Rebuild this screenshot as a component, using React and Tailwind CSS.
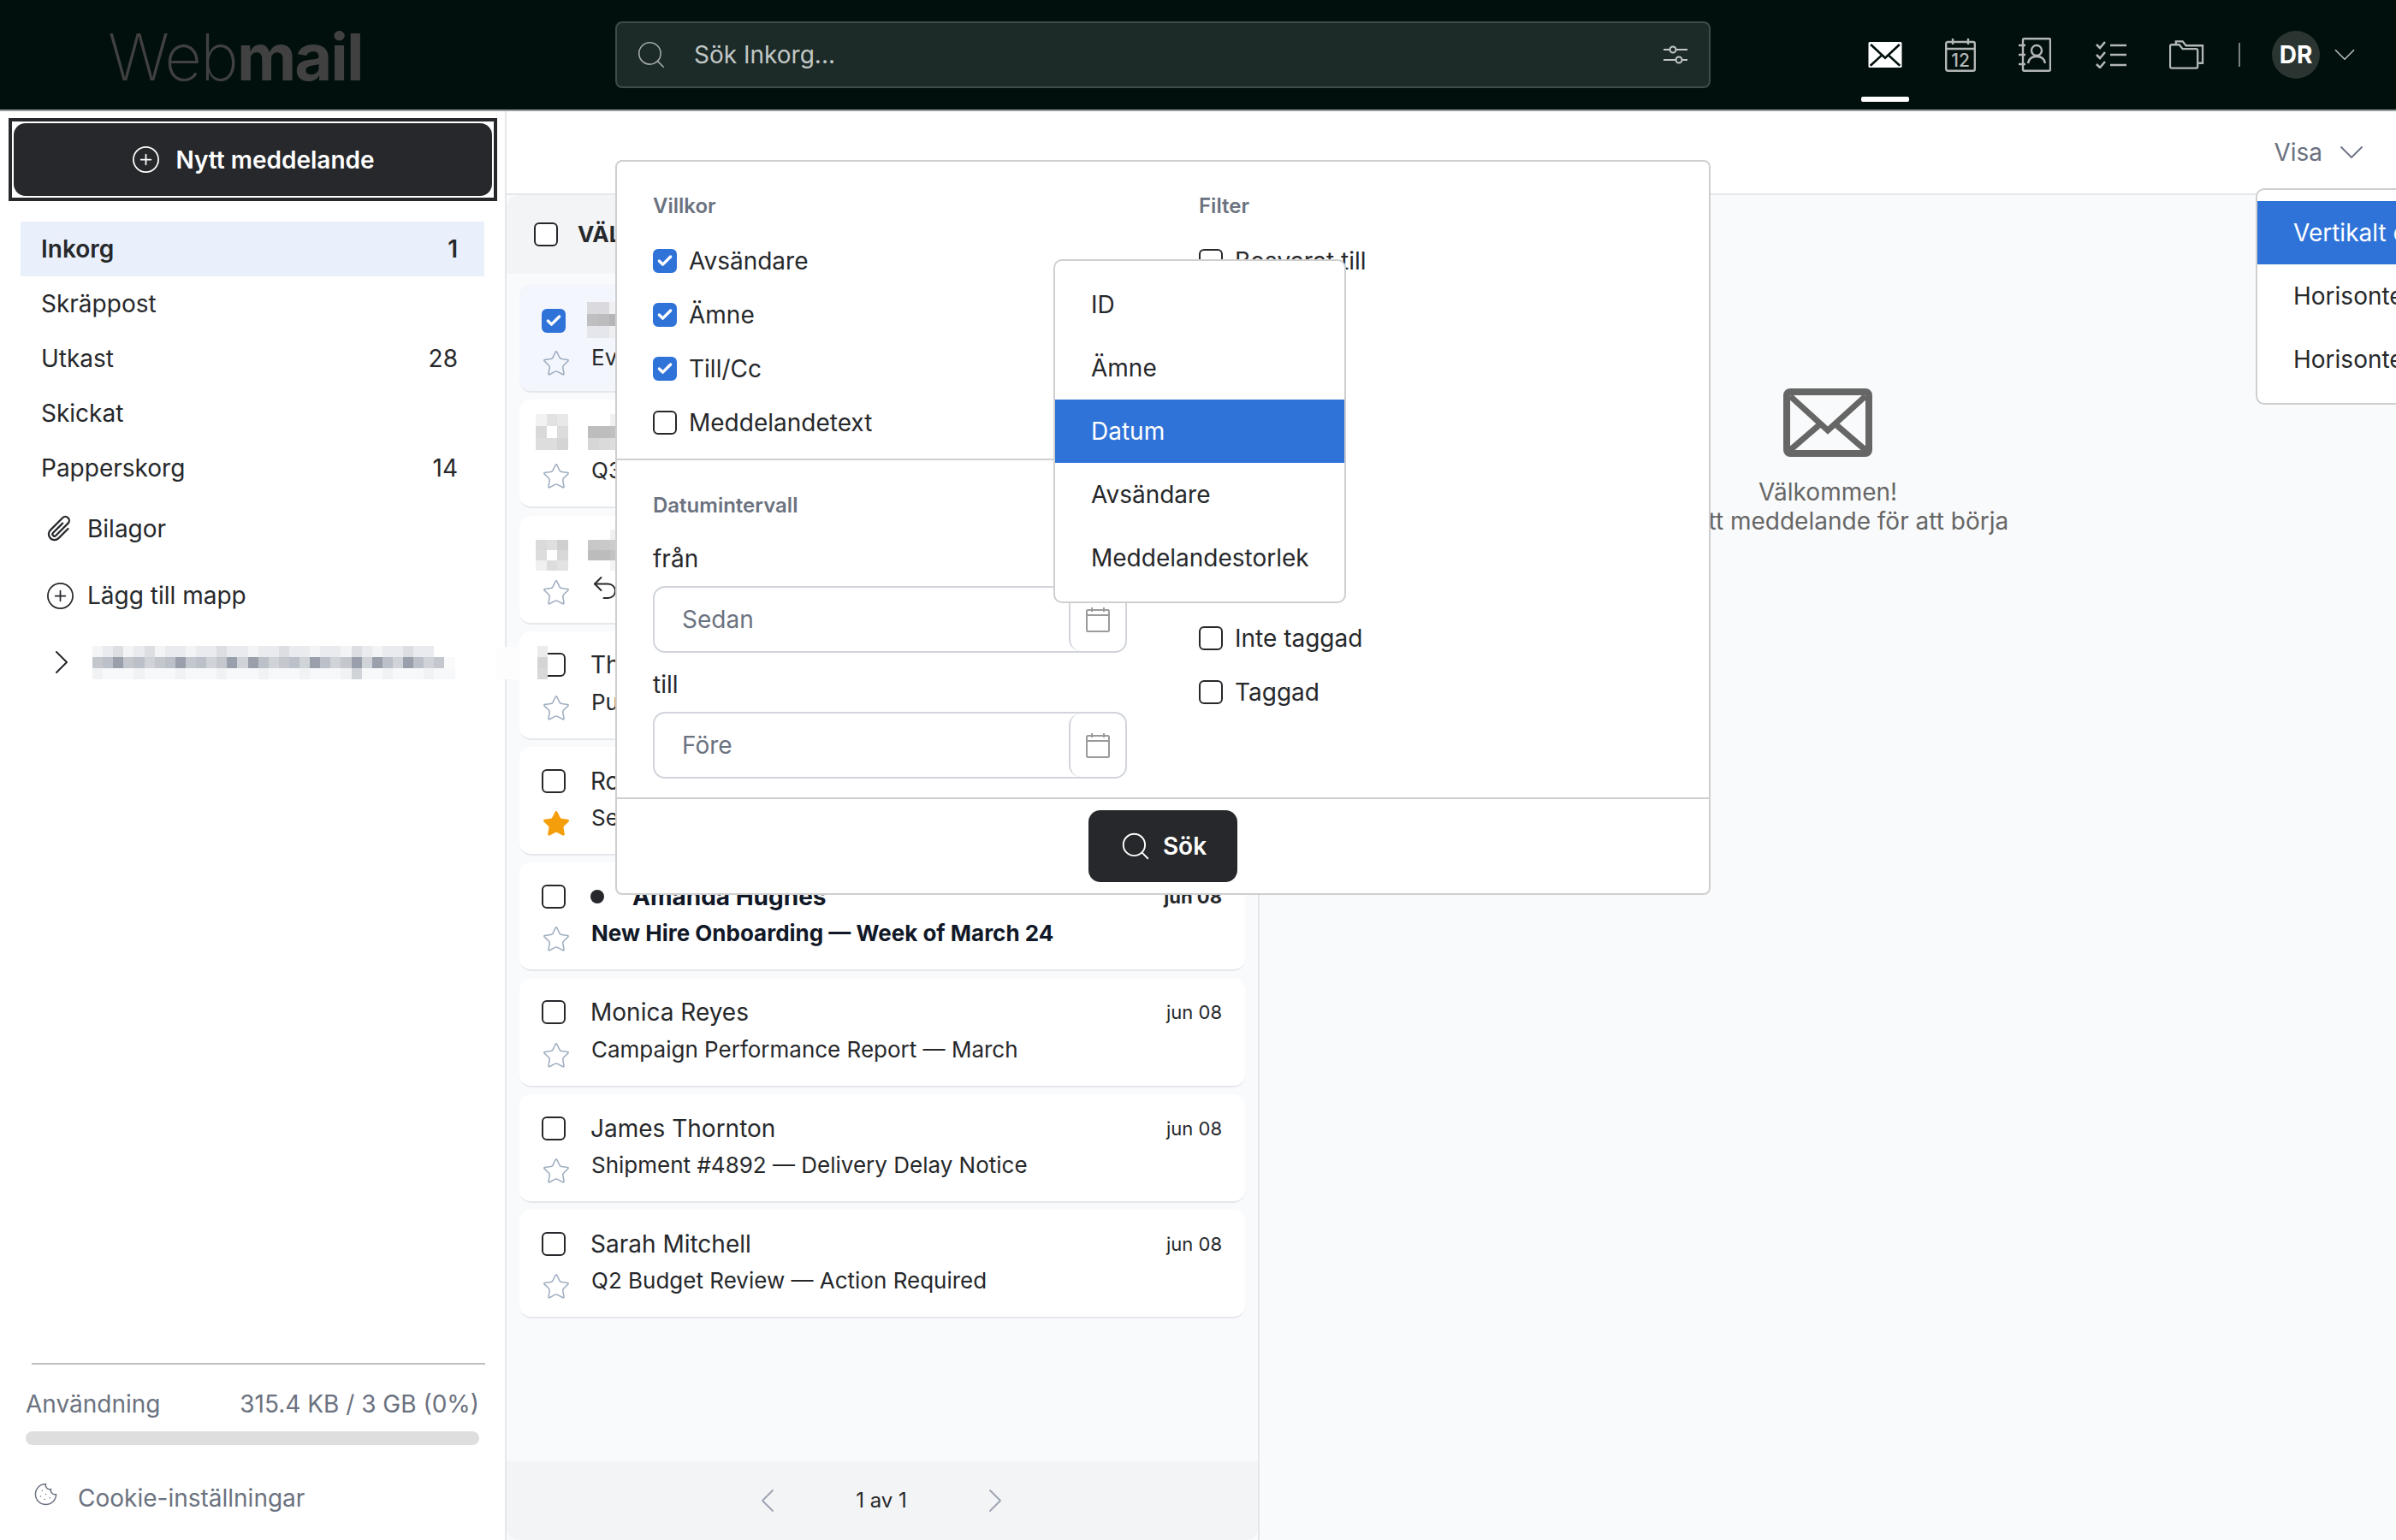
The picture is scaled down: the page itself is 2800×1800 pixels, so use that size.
import React from "react";
import { Star, Undo2, Cookie, ChevronDown, ChevronRight, ChevronLeft, CirclePlus, Search, Check } from "lucide-react";
import { BsPaperclip } from "react-icons/bs";

const Box = ({ checked, hidden }) => (
  <span className={`flex h-[28px] w-[28px] shrink-0 items-center justify-center rounded-[6px] border-2 ${hidden ? "invisible" : ""} ${checked ? "border-[#2f73d9] bg-[#2f73d9]" : "border-[#26282b] bg-white"}`}>
    {checked && <Check size={20} strokeWidth={4} color="#fff" />}
  </span>
);

const Mosaic = ({ rows, cw = 13, ch = 14, className }) => (
  <svg className={className} width={rows[0].length * cw} height={rows.length * ch} shapeRendering="crispEdges">
    {rows.map((r, y) => r.map((c, x) => c && <rect key={x + "-" + y} x={x * cw} y={y * ch} width={cw} height={ch} fill={c} />))}
  </svg>
);

const dark = new Set([2, 8, 13, 15, 21, 25, 27, 30]);
const folderRows = [
  Array.from({ length: 35 }, (_, i) => (i > 32 ? "#ffffff" : [2, 5, 12, 18, 25, 30].includes(i) ? "#dcdee2" : i % 3 === 0 ? "#f3f4f6" : "#eaebee")),
  Array.from({ length: 35 }, (_, i) => (i > 33 ? "#fafafa" : dark.has(i) ? "#9aa0ab" : i % 3 === 0 ? "#c4c7cd" : i % 3 === 1 ? "#bcc0c8" : "#d0d3d8")),
  Array.from({ length: 35 }, (_, i) => (i === 25 ? "#d0d3d8" : i % 4 === 0 ? "#f1f2f4" : "#f7f8f9")),
];

const CalendarGlyph = ({ className, color = "#9a9a9a" }) => (
  <svg viewBox="0 0 28 30" className={className} fill="none" stroke={color} strokeWidth="2">
    <rect x="1" y="4" width="26" height="25" rx="1.5" />
    <path d="M1 10h26M7 1v5M21 1v5" />
  </svg>
);

const Nav = ({ label, count, active }) => (
  <div className={`flex h-[64px] items-center justify-between pl-[24px] pr-[31px] ${active ? "bg-[#eaf0fb] font-semibold" : ""}`}>
    <span>{label}</span>
    {count && <span>{count}</span>}
  </div>
);

const Card = ({ name, subject, bold, checked, fav, selected, over, reply, dot, hideBox }) => (
  <div className={`relative h-[127px] shrink-0 rounded-[14px] border-b-2 border-[#e5e7eb] ${selected ? "bg-[#f3f6fd] pt-[3px]" : "bg-white"}`}>
    <div className="flex h-[79px] items-center pl-[26px] pr-[27px]">
      <Box checked={checked} hidden={hideBox} />
      {dot && <span className="ml-[29px] h-[16px] w-[16px] rounded-full bg-[#26282b]" />}
      <span className={`${dot ? "ml-[33px]" : "ml-[29px]"} flex-1 ${bold ? "font-bold text-[#111827]" : ""}`}>{name}</span>
      <span className={`text-[22px] ${bold ? "font-bold" : ""}`}>jun 08</span>
    </div>
    <div className="-mt-[9px] flex h-[44px] items-center pl-[26px]">
      <Star size={34} strokeWidth={1.1} className="mb-[4px]" color={fav ? "#f59e0b" : "#a0aec0"} fill={fav ? "#f59e0b" : "none"} />
      {reply && <Undo2 size={36} strokeWidth={1.3} className="mb-[16px] ml-[22px]" />}
      <span className={`${reply ? "ml-[8px]" : "ml-[24px]"} mb-[18px] text-[26px] ${bold ? "font-bold text-[#111827]" : ""}`}>{subject}</span>
    </div>
    {over}
  </div>
);

const Row = ({ label, checked }) => (
  <label className="flex h-[63px] items-center gap-[14px]">
    <Box checked={checked} />
    <span>{label}</span>
  </label>
);

const DateField = ({ placeholder }) => (
  <div className="flex h-[78px] w-[554px] rounded-[14px] border-2 border-[#d1d5db]">
    <div className="flex flex-1 items-center pl-[32px] text-[#6b7280]">{placeholder}</div>
    <div className="flex w-[66px] items-center justify-center rounded-[14px] border-l-2 border-[#d1d5db]">
      <CalendarGlyph className="h-[30px] w-[28px]" />
    </div>
  </div>
);

const Item = ({ children, active }) => (
  <div className={`flex h-[74px] items-center pl-[42px] whitespace-nowrap ${active ? "bg-[#2f73d9] text-white" : ""}`}>{children}</div>
);

export default function App() {
  return (
    <div className="relative flex h-[1800px] w-[2800px] flex-col overflow-hidden bg-white text-[28px] leading-[40px] text-[#26282b] [font-family:Inter,sans-serif]">
      {/* Header */}
      <header className="flex h-[130px] shrink-0 items-center border-b-2 border-[#9a9e9c] bg-[#010f0d]">
        <div className="w-[719px] pl-[126px] pt-[4px] text-[76px] leading-none tracking-[-2px] text-[#414141]">
          <span className="font-extralight">Web</span>
          <span className="font-bold">mail</span>
        </div>
        <div className="flex h-[78px] w-[1280px] items-center rounded-[8px] border-2 border-[#3e4c49] bg-[#1c2b28] pl-[21px] pr-[25px] text-[#c2c7c5]">
          <Search size={38} strokeWidth={1} color="#a4aaa8" />
          <span className="ml-[31px] flex-1">Sök Inkorg...</span>
          <svg viewBox="0 0 28 24" className="h-[24px] w-[28px]" fill="none" stroke="#c2c7c5" strokeWidth="2">
            <path d="M0 6h7M15 6h13M0 18h14M22 18h6" />
            <circle cx="11" cy="6" r="3.5" />
            <circle cx="18" cy="18" r="3.5" />
          </svg>
        </div>
        <div className="ml-[184px] flex items-center">
          <div className="relative">
            <svg viewBox="0 0 104 80" className="h-[30px] w-[40px]">
              <rect width="104" height="80" rx="4" fill="#ffffff" />
              <path d="M7 8 52 50 97 8M42 41 6 74M62 41 98 74" fill="none" stroke="#010f0d" strokeWidth="7" />
            </svg>
            <span className="absolute left-[-8px] top-[64px] h-[6px] w-[56px] rounded-[2px] bg-white" />
          </div>
          <svg viewBox="0 0 36 40" className="ml-[50px] h-[40px] w-[36px]" fill="none" stroke="#b3b7b5" strokeWidth="2.4">
            <rect x="1.2" y="5" width="33.6" height="33.8" rx="2" />
            <path d="M1 13h34M9 1v7M27 1v7" />
            <text x="18" y="33.5" textAnchor="middle" fontSize="21" fontWeight="500" fill="#b3b7b5" stroke="none" fontFamily="Inter">12</text>
          </svg>
          <svg viewBox="0 0 38 40" className="ml-[50px] h-[40px] w-[38px]" fill="none" stroke="#b3b7b5" strokeWidth="2.4">
            <rect x="5" y="1.2" width="32" height="37.6" rx="1.5" />
            <path d="M0 9h8M0 20h8M0 31h8" />
            <circle cx="21" cy="15" r="6" />
            <path d="M11 30c1-6 5-8 10-8s9 2 10 8" />
          </svg>
          <svg viewBox="0 0 36 32" className="ml-[52px] h-[32px] w-[36px]" fill="none" stroke="#b3b7b5" strokeWidth="2.6">
            <path d="M1 4l4 4 6-7M1 16l4 4 6-7M1 27l4 4 6-7" />
            <path d="M17 5h19M17 16h19M17 28h19" />
          </svg>
          <svg viewBox="0 0 42 34" className="ml-[50px] h-[34px] w-[41px]" fill="none" stroke="#b3b7b5" strokeWidth="2.4">
            <path d="M1 10V31a2 2 0 0 0 2 2h29a2 2 0 0 0 2-2V12a2 2 0 0 0-2-2H16l-4-5H3a2 2 0 0 0-2 2z" />
            <path d="M8 4V1h8l4 5h20v21h-5" />
          </svg>
          <span className="ml-[40px] h-[28px] w-[2px] bg-[#7a807e]" />
          <span className="ml-[37px] flex h-[56px] w-[56px] items-center justify-center rounded-full bg-[#2a3532] font-bold text-white">DR</span>
          <ChevronDown size={42} strokeWidth={1} className="ml-[8px]" color="#b3b7b5" />
        </div>
      </header>

      <div className="flex min-h-0 flex-1">
        {/* Sidebar */}
        <aside className="flex w-[592px] shrink-0 flex-col border-r-2 border-[#e5e7eb]">
          <div className="ml-[10px] mt-[8px] h-[97px] w-[571px] border-4 border-[#26282b] p-[2px]">
            <div className="flex h-full items-center justify-center gap-[17px] rounded-[14px] bg-[#26282b] font-semibold text-white">
              <CirclePlus size={35} strokeWidth={1.2} />
              <span>Nytt meddelande</span>
            </div>
          </div>
          <nav className="ml-[24px] mt-[24px] w-[542px]">
            <Nav label="Inkorg" count="1" active />
            <Nav label="Skräppost" />
            <Nav label="Utkast" count="28" />
            <Nav label="Skickat" />
            <Nav label="Papperskorg" count="14" />
          </nav>
          <div className="ml-[52px] mt-[7px] flex h-[64px] items-center gap-[14px]">
            <BsPaperclip size={36} className="rotate-45" />
            <span>Bilagor</span>
          </div>
          <div className="ml-[53px] mt-[14px] flex h-[64px] items-center gap-[14px]">
            <CirclePlus size={35} strokeWidth={1.2} />
            <span>Lägg till mapp</span>
          </div>
          <div className="ml-[48px] mt-[14px] flex h-[64px] items-center">
            <ChevronRight size={48} strokeWidth={1} />
            <Mosaic rows={folderRows} cw={12.1} ch={13} className="ml-[12px]" />
          </div>
          <div className="mx-[37px] mt-auto h-[2px] w-[530px] bg-[#bcc0bf]" />
          <div className="ml-[30px] mt-[26px] flex w-[530px] justify-between text-[#6b7280]">
            <span>Användning</span>
            <span>315.4 KB / 3 GB (0%)</span>
          </div>
          <div className="ml-[30px] mt-[12px] h-[16px] w-[530px] rounded-[8px] bg-[#dedede]" />
          <div className="mb-[29px] ml-[39px] mt-[42px] flex items-center gap-[23px] text-[#6b7280]">
            <Cookie size={29} strokeWidth={1.2} className="-mt-[10px]" />
            <span>Cookie-inställningar</span>
          </div>
        </aside>

        {/* Main */}
        <main className="flex min-w-0 flex-1 flex-col">
          <div className="flex h-[98px] shrink-0 items-center justify-end gap-[10px] border-b-2 border-[#e5e7eb] pr-[28px] text-[#6b7280]">
            <span>Visa</span>
            <ChevronDown size={48} strokeWidth={0.9} />
          </div>
          <div className="flex min-h-0 flex-1 bg-[#f9fafb]">
            <section className="flex w-[880px] shrink-0 flex-col border-r-2 border-[#e5e7eb]">
              <div className="flex h-[92px] shrink-0 items-center gap-[23px] rounded-tl-[14px] bg-[#f3f4f6] pl-[32px] text-[26px] font-bold">
                <Box />
                <span>VÄLJ ALLA</span>
              </div>
              <div className="flex flex-1 flex-col gap-[8.3px] px-[15px] pt-[12px]">
                <Card name="Event" subject="Event Planning" checked selected over={<Mosaic rows={[["#d9d9de", "#d9d9de", "#f0f0f3"], ["#bfbfc2", "#bcbcbf", "#b5b5b8"], ["#e5e6ec", "#e5e6ec", "#eeeef0"]]} className="absolute left-[79px] top-[21px]" />} />
                <Card name="Quinn" subject="Q3 Report" hideBox over={<>
                  <Mosaic rows={[["#f2f2f2", "#e2e2e2", "#e8e8e8"], ["#d9d9d9", "#ffffff", "#dcdcdc"], ["#dddddd", "#dddddd", "#d4d4d4"]]} className="absolute left-[19px] top-[17px]" cw={12.5} />
                  <Mosaic rows={[["#ffffff", "#ffffff", "#f0f0f0"], ["#bdbdbd", "#bdbdbd", "#c0c0c0"], ["#d6d6d6", "#dadada", "#dddddd"]]} className="absolute left-[80px] top-[17px]" />
                </>} />
                <Card name="Nina" subject="Reply" reply hideBox over={<>
                  <Mosaic rows={[["#dadada", "#dfdfdf", "#cfcfcf"], ["#dcdcdc", "#ffffff", "#d8d8d8"], ["#f0f0f0", "#dddddd", "#e2e2e2"]]} className="absolute left-[19px] top-[28px]" cw={12.5} ch={12} />
                  <Mosaic rows={[["#ffffff", "#ffffff", "#f0f0f0"], ["#c7c7c7", "#c9c9c9", "#cccccc"], ["#bcbcbc", "#bcbcbc", "#c2c2c2"], ["#ffffff", "#ffffff", "#f4f4f4"]]} className="absolute left-[80px] top-[16px]" ch={12} />
                </>} />
                <Card name="Thomas" subject="Purchase" over={<Mosaic rows={[["#ececec"], ["#d4d4d4"], ["#d8d8d8"]]} cw={12} ch={13} className="absolute left-[21px] top-[17px]" />} />
                <Card name="Robert" subject="Security" fav />
                <Card name="Amanda Hughes" subject="New Hire Onboarding — Week of March 24" bold dot />
                <Card name="Monica Reyes" subject="Campaign Performance Report — March" />
                <Card name="James Thornton" subject="Shipment #4892 — Delivery Delay Notice" />
                <Card name="Sarah Mitchell" subject="Q2 Budget Review — Action Required" />
              </div>
              <div className="flex h-[92px] shrink-0 items-center justify-center gap-[79px] rounded-b-[14px] bg-[#f3f4f6] pr-[2px] text-[24px]">
                <ChevronLeft size={48} strokeWidth={0.9} color="#9ca3af" />
                <span>1 av 1</span>
                <ChevronRight size={48} strokeWidth={0.9} color="#9ca3af" />
              </div>
            </section>
            <section className="flex flex-1 flex-col items-center pt-[226px] text-center text-[#666666]">
              <svg viewBox="0 0 104 80" className="h-[80px] w-[104px]" fill="none" stroke="#666666">
                <rect x="4" y="4" width="96" height="72" rx="4" strokeWidth="8" />
                <path d="M8 9 52 49 96 9M44 41 8 72M60 41 96 72" strokeWidth="7" />
              </svg>
              <div className="mt-[24px] leading-[34px]">Välkommen!</div>
              <div className="leading-[34px]">Välj ett meddelande för att börja</div>
            </section>
          </div>
        </main>
      </div>

      {/* Faint trace of the redaction over the sidebar border */}
      <div className="absolute left-[579px] top-[756px] h-[38px] w-[28px] bg-[#fdfdfd]" />

      {/* Search options popover */}
      <div className="absolute left-[719px] top-[187px] flex h-[859px] w-[1280px] flex-col rounded-[8px] border-2 border-[#cfcfcf] bg-white">
        <div className="flex h-[743px] shrink-0">
          <div className="w-[640px]">
            <div className="h-[349px] border-b-2 border-[#cfcfcf] pl-[42px] pt-[36px]">
              <div className="text-[24px] font-semibold leading-[32px] text-[#6b7280]">Villkor</div>
              <div className="mt-[16px]">
                <Row label="Avsändare" checked />
                <Row label="Ämne" checked />
                <Row label="Till/Cc" checked />
                <Row label="Meddelandetext" />
              </div>
            </div>
            <div className="pl-[42px] pt-[37px]">
              <div className="text-[24px] font-semibold leading-[32px] text-[#6b7280]">Datumintervall</div>
              <div className="mt-[26px]">från</div>
              <div className="mt-[12px]"><DateField placeholder="Sedan" /></div>
              <div className="mt-[17px]">till</div>
              <div className="mt-[12px]"><DateField placeholder="Före" /></div>
            </div>
          </div>
          <div className="flex-1 pl-[40px] pt-[36px]">
            <div className="text-[24px] font-semibold leading-[32px] text-[#6b7280]">Filter</div>
            <div className="mt-[16px]">
              <Row label="Besvarat till" />
              <div className="h-[378px]" />
              <Row label="Inte taggad" />
              <Row label="Taggad" />
            </div>
          </div>
        </div>
        <div className="flex flex-1 items-center justify-center border-t-2 border-[#cfcfcf]">
          <div className="flex h-[84px] w-[174px] items-center justify-center gap-[13px] rounded-[14px] bg-[#26282b] font-semibold text-white">
            <Search size={38} strokeWidth={1.2} />
            <span>Sök</span>
          </div>
        </div>
      </div>

      {/* Sort menu */}
      <div className="absolute left-[1231px] top-[303px] h-[402px] w-[342px] rounded-[10px] border-2 border-[#cfcfcf] bg-white py-[14px]">
        <Item>ID</Item>
        <Item>Ämne</Item>
        <Item active>Datum</Item>
        <Item>Avsändare</Item>
        <Item>Meddelandestorlek</Item>
      </div>

      {/* View menu */}
      <div className="absolute left-[2636px] top-[220px] h-[253px] w-[340px] rounded-[10px] border-2 border-[#cfcfcf] bg-white py-[13px]">
        <Item active>Vertikalt delad</Item>
        <Item>Horisontellt delad</Item>
        <Item>Horisontell lista</Item>
      </div>
    </div>
  );
}
